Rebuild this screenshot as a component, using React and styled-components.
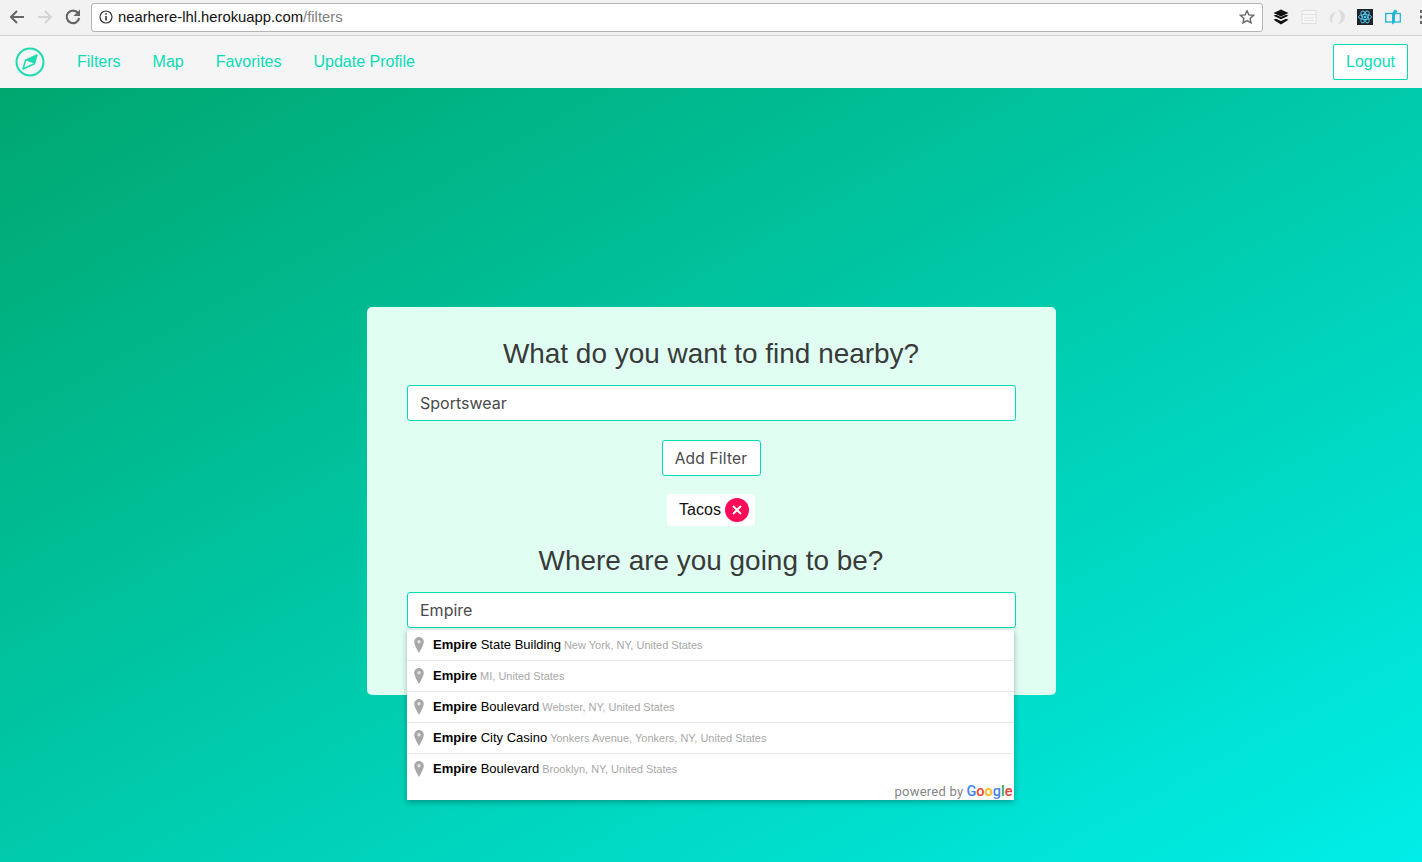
import styled, { createGlobalStyle } from 'styled-components'

const GlobalStyle = createGlobalStyle`
  html, body {
    margin: 0;
    padding: 0;
    height: 100%;
    overflow: hidden;
  }
  body {
    font-family: "Liberation Sans", Arial, sans-serif;
  }
  * {
    box-sizing: border-box;
  }
`

const Page = styled.div`
  display: flex;
  flex-direction: column;
  height: 862px;
`

const Toolbar = styled.div`
  display: flex;
  align-items: center;
  height: 36px;
  padding: 0 0 1px 8px;
  background: #f2f2f2;
  border-bottom: 1px solid #d2d2d2;
  flex-shrink: 0;
`
const ToolButton = styled.svg`
  width: 18px;
  height: 18px;
  margin-right: 10px;
  flex-shrink: 0;
`
const UrlBox = styled.div`
  display: flex;
  align-items: center;
  flex-shrink: 0;
  width: 1172px;
  height: 29px;
  margin-left: -1px;
  padding: 0 7px;
  background: white;
  border: 1px solid #b4b4b4;
  border-radius: 3px;
  font-size: 14.8px;
  color: #111;
`
const UrlPath = styled.span`
  color: #808080;
`
const UrlInfo = styled.svg`
  width: 14px;
  height: 14px;
  margin-right: 5px;
`
const UrlStar = styled.svg`
  width: 16px;
  height: 16px;
  margin-left: auto;
`
const Extensions = styled.div`
  display: flex;
  align-items: center;
  flex-shrink: 0;
  gap: 12px;
  margin-left: 10px;
`
const Extension = styled.svg`
  width: 16px;
  height: 16px;
`
const MenuDots = styled.svg`
  width: 3px;
  height: 14px;
  margin-left: 19px;
  flex-shrink: 0;
`

const Nav = styled.nav`
  display: flex;
  align-items: center;
  height: 52px;
  padding: 0 14px 0 15px;
  background: #f5f5f5;
  flex-shrink: 0;
`
const Logo = styled.svg`
  width: 30px;
  height: 30px;
  margin-right: 32px;
`
const NavLink = styled.a`
  margin-right: 32px;
  font-size: 16px;
  color: #0adcb6;
`
const Logout = styled.button`
  margin-left: auto;
  height: 36px;
  width: 75px;
  padding: 0;
  background: white;
  border: 1px solid #00dcb4;
  border-radius: 2px;
  font-family: inherit;
  font-size: 16px;
  color: #0adcb6;
`

const Hero = styled.main`
  flex: 1;
  display: flex;
  justify-content: center;
  align-items: flex-start;
  padding-top: 219px;
  background: linear-gradient(to bottom right, #00a76f 0%, #00eee8 100%);
`
const Card = styled.section`
  display: flex;
  flex-direction: column;
  align-items: center;
  position: relative;
  width: 689px;
  height: 388px;
  padding: 30px 40px 0;
  background: #e0fff2;
  border-radius: 5px;
`
const Title = styled.h2`
  margin: 0;
  font-size: 27.95px;
  line-height: 34px;
  font-weight: 400;
  color: #3a3a3a;
`
const Field = styled.div`
  display: flex;
  align-items: center;
  width: 609px;
  height: 36px;
  margin-top: 14px;
  padding: 0 12.5px;
  background: white;
  border: 1px solid #00dcb4;
  border-radius: 3px;
  font-family: "Inter", sans-serif;
  font-size: 16px;
  color: #4a4a4a;
`
const AddButton = styled.button`
  width: 99px;
  height: 36px;
  margin-top: 19px;
  padding: 0;
  background: white;
  border: 1px solid #00dcb4;
  border-radius: 3px;
  font-family: "Inter", sans-serif;
  font-size: 15.5px;
  letter-spacing: 0.2px;
  color: #4a4a4a;
`
const Tag = styled.div`
  display: flex;
  align-items: center;
  gap: 4px;
  height: 32px;
  margin-top: 18px;
  padding: 0 6px 0 12px;
  background: white;
  border-radius: 3px;
  font-size: 16px;
  color: #111;
`
const TagRemove = styled.svg`
  width: 24px;
  height: 24px;
`
const SecondTitle = styled(Title)`
  margin-top: 18px;
`

const Dropdown = styled.div`
  position: absolute;
  top: 322px;
  left: 40px;
  width: 607px;
  height: 171px;
  background: white;
  border-top: 1px solid #e6e6e6;
  box-shadow: 0 2px 6px rgba(0, 0, 0, 0.3);
`
const Suggestion = styled.div`
  display: flex;
  align-items: baseline;
  height: 31px;
  padding: 7px 0 0 26.5px;
  position: relative;
  border-bottom: ${(props) => (props.$last ? 'none' : '1px solid #e6e6e6')};
  font-size: 13px;
  color: #000;
  white-space: pre;
`
const Pin = styled.svg`
  position: absolute;
  left: 7px;
  top: 7px;
  width: 10px;
  height: 16px;
`
const Match = styled.b`
  font-weight: 700;
`
const Secondary = styled.span`
  margin-left: 3px;
  font-size: 11px;
  color: #a8a8a8;
`
const Attribution = styled.div`
  position: absolute;
  right: 1px;
  bottom: 0;
  display: flex;
  align-items: baseline;
  font-family: "Roboto", sans-serif;
  font-size: 13px;
  letter-spacing: 0.25px;
  color: #868686;
`
const GoogleMark = styled.span`
  margin-left: 3px;
  font-size: 14.5px;
  letter-spacing: 0;
  font-weight: 500;
`
const Letter = styled.span`
  color: ${(props) => props.$color};
`

const suggestions = [
  { rest: ' State Building', place: 'New York, NY, United States' },
  { rest: '', place: 'MI, United States' },
  { rest: ' Boulevard', place: 'Webster, NY, United States' },
  { rest: ' City Casino', place: 'Yonkers Avenue, Yonkers, NY, United States' },
  { rest: ' Boulevard', place: 'Brooklyn, NY, United States' },
]

const googleLetters = [
  ['G', '#4285f4'],
  ['o', '#ea4335'],
  ['o', '#fbbc05'],
  ['g', '#4285f4'],
  ['l', '#34a853'],
  ['e', '#ea4335'],
]

const BrowserBar = () => (
  <Toolbar>
    <ToolButton viewBox="0 0 18 18" fill="none" stroke="#666" strokeWidth="2">
      <path d="M16 9H3M9 3L3 9l6 6" />
    </ToolButton>
    <ToolButton viewBox="0 0 18 18" fill="none" stroke="#d4d4d4" strokeWidth="2">
      <path d="M2 9h13M9 3l6 6-6 6" />
    </ToolButton>
    <ToolButton viewBox="0 0 18 18" fill="none" stroke="#666" strokeWidth="2.2">
      <path d="M14 5A6.3 6.3 0 1 0 15.2 10" />
      <path d="M16 1.500v6.500h-6.500z" fill="#666" stroke="none" />
    </ToolButton>
    <UrlBox>
      <UrlInfo viewBox="0 0 14 14" fill="none" stroke="#333" strokeWidth="1.2">
        <circle cx="7" cy="7" r="6" />
        <path d="M7 6v4.500M7 3.300v1.500" strokeWidth="1.600" />
      </UrlInfo>
      nearhere-lhl.herokuapp.com<UrlPath>/filters</UrlPath>
      <UrlStar viewBox="0 0 16 16" fill="none" stroke="#666" strokeWidth="1.4">
        <path d="M8 1.800l1.900 4.100 4.500.5-3.300 3 .9 4.400L8 11.600l-4 2.200.9-4.400-3.300-3 4.500-.5z" />
      </UrlStar>
    </UrlBox>
    <Extensions>
      <Extension viewBox="0 0 16 16">
        <path d="M8 .5l7.500 3.500L8 7.500.5 4z" fill="#111" />
        <path d="M.5 6.800L3 5.700l5 2.400 5-2.400 2.500 1.100L8 10.300z" fill="#111" />
        <path d="M.5 10.800L3 9.700l5 2.400 5-2.400 2.500 1.100L8 15.500z" fill="#111" />
      </Extension>
      <Extension viewBox="0 0 16 16">
        <rect x="1" y="1.500" width="14" height="13" fill="#f7f7f7" stroke="#dedede" />
        <path d="M1 5.500h14M3 9h10M3 11.500h10" stroke="#e2e2e2" />
      </Extension>
      <Extension viewBox="0 0 16 16" fill="#dcdcdc">
        <path d="M8.500 1C13 .8 16 4 15.800 8c-.2 4-3.300 7.200-8 7.500 2.500-1.500 4.200-3.800 4.200-6.800S10.800 3 8.500 1z" />
        <path d="M7 3C3.500 3.500.8 6 .6 9.300c-.1 2.300 1 4.400 3 5.400C2.600 12.500 3 10 4 8s2-3.500 3-5z" />
      </Extension>
      <Extension viewBox="0 0 16 16" fill="none" stroke="#4fc3e8" strokeWidth="1">
        <rect width="16" height="16" fill="#20232a" stroke="none" />
        <ellipse cx="8" cy="8" rx="6.500" ry="2.600" />
        <ellipse cx="8" cy="8" rx="6.500" ry="2.600" transform="rotate(60 8 8)" />
        <ellipse cx="8" cy="8" rx="6.500" ry="2.600" transform="rotate(120 8 8)" />
        <circle cx="8" cy="8" r="1.500" fill="#4fc3e8" stroke="none" />
      </Extension>
      <Extension viewBox="0 0 16 16" fill="none" stroke="#1fb6d9" strokeWidth="1.300">
        <rect x=".7" y="4.500" width="14.600" height="8.500" />
        <path d="M7 4.500L9.800.5l2.600 1.500-2.400 4v7.500L7 15.500z" fill="#1fb6d9" stroke="none" />
      </Extension>
    </Extensions>
    <MenuDots viewBox="0 0 3 14" fill="#666">
      <rect y="0" width="3" height="3" />
      <rect y="5.500" width="3" height="3" />
      <rect y="11" width="3" height="3" />
    </MenuDots>
  </Toolbar>
)

const TopNav = () => (
  <Nav>
    <Logo viewBox="0 0 30 30" fill="none" stroke="#1fdcb0" strokeWidth="2">
      <circle cx="15" cy="15" r="13.500" />
      <path d="M22 8l-2.600 8.700L8 22l2.600-8.700z" strokeWidth="1.500" strokeLinejoin="round" />
      <path d="M22 8l-2.600 8.700-8.800-3.400z" fill="#1fdcb0" stroke="none" />
    </Logo>
    <NavLink>Filters</NavLink>
    <NavLink>Map</NavLink>
    <NavLink>Favorites</NavLink>
    <NavLink>Update Profile</NavLink>
    <Logout>Logout</Logout>
  </Nav>
)

const App = () => (
  <Page>
    <GlobalStyle />
    <BrowserBar />
    <TopNav />
    <Hero>
      <Card>
        <Title>What do you want to find nearby?</Title>
        <Field>Sportswear</Field>
        <AddButton>Add Filter</AddButton>
        <Tag>
          Tacos
          <TagRemove viewBox="0 0 24 24">
            <circle cx="12" cy="12" r="12" fill="#ff0a58" />
            <path d="M8 8l8 8M16 8l-8 8" stroke="white" strokeWidth="2" />
          </TagRemove>
        </Tag>
        <SecondTitle>Where are you going to be?</SecondTitle>
        <Field>Empire</Field>
        <Dropdown>
          {suggestions.map((item, i) => (
            <Suggestion key={i} $last={i === suggestions.length - 1}>
              <Pin viewBox="0 0 10 16">
                <path
                  d="M5 0A4.800 4.800 0 0 0 .2 4.800C.2 8.200 5 16 5 16s4.800-7.800 4.800-11.200A4.800 4.800 0 0 0 5 0z"
                  fill="#a8a8a8"
                />
                <circle cx="5" cy="4.800" r="1.700" fill="#e4e4e4" />
              </Pin>
              <Match>Empire</Match>
              {item.rest}
              <Secondary>{item.place}</Secondary>
            </Suggestion>
          ))}
          <Attribution>
            powered by
            <GoogleMark>
              {googleLetters.map(([letter, color], i) => (
                <Letter key={i} $color={color}>
                  {letter}
                </Letter>
              ))}
            </GoogleMark>
          </Attribution>
        </Dropdown>
      </Card>
    </Hero>
  </Page>
)

export default App
